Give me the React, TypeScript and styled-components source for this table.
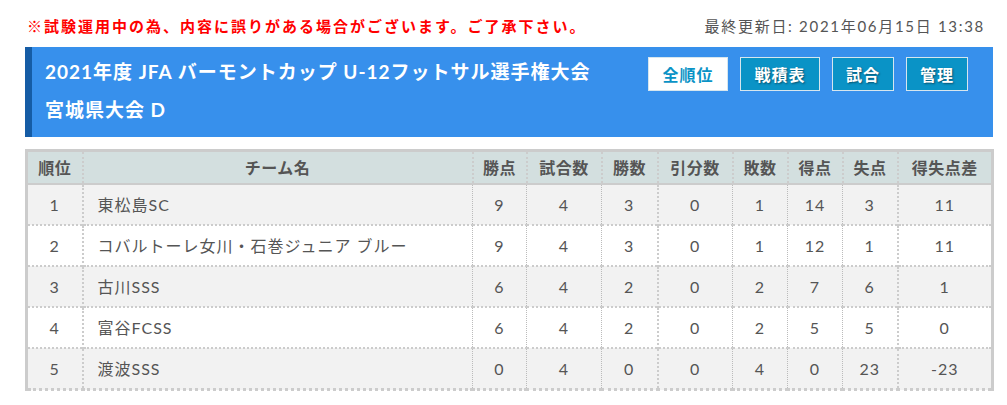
import styled, { createGlobalStyle } from "styled-components";

const GlobalStyle = createGlobalStyle`
  body {
    margin: 0;
    background: #fff;
    font-family: "Lato", "Noto Sans CJK JP", sans-serif;
    color: #555;
  }
`;

const columns = [
  { label: "順位", width: 56 },
  { label: "チーム名", width: 390 },
  { label: "勝点", width: 54 },
  { label: "試合数", width: 75 },
  { label: "勝数", width: 56 },
  { label: "引分数", width: 75 },
  { label: "敗数", width: 55 },
  { label: "得点", width: 55 },
  { label: "失点", width: 55 },
  { label: "得失点差", width: 95 },
];

const rows: (string | number)[][] = [
  [1, "東松島SC", 9, 4, 3, 0, 1, 14, 3, 11],
  [2, "コバルトーレ女川・石巻ジュニア ブルー", 9, 4, 3, 0, 1, 12, 1, 11],
  [3, "古川SSS", 6, 4, 2, 0, 2, 7, 6, 1],
  [4, "富谷FCSS", 6, 4, 2, 0, 2, 5, 5, 0],
  [5, "渡波SSS", 0, 4, 0, 0, 4, 0, 23, -23],
];

const buttons = ["全順位", "戦積表", "試合", "管理"];

export default function App() {
  return (
    <>
      <GlobalStyle />
      <Page>
        <TopBar>
          <Notice>※試験運用中の為、内容に誤りがある場合がございます。ご了承下さい。</Notice>
          <Updated>最終更新日: 2021年06月15日 13:38</Updated>
        </TopBar>
        <Header>
          <Title>
            2021年度 JFA バーモントカップ U-12フットサル選手権大会
            <br />
            宮城県大会 D
          </Title>
          <Nav>
            {buttons.map((b, i) => (
              <NavButton key={b} $active={i === 0} $wide={i < 2}>
                {b}
              </NavButton>
            ))}
          </Nav>
        </Header>
        <Table>
          <colgroup>
            {columns.map((c) => (
              <col key={c.label} style={{ width: c.width }} />
            ))}
          </colgroup>
          <thead>
            <tr>
              {columns.map((c) => (
                <Th key={c.label}>{c.label}</Th>
              ))}
            </tr>
          </thead>
          <tbody>
            {rows.map((r, i) => (
              <Row key={i} $odd={i % 2 === 0}>
                {r.map((v, j) => (
                  <Td key={j} $left={j === 1}>
                    {v}
                  </Td>
                ))}
              </Row>
            ))}
          </tbody>
        </Table>
      </Page>
    </>
  );
}

const Page = styled.div`
  width: 968px;
  margin-left: 25px;
`;

const TopBar = styled.div`
  display: flex;
  justify-content: space-between;
  align-items: center;
  height: 47px;
  padding: 4px 8px 0 2px;
  box-sizing: border-box;
`;

const Notice = styled.span`
  color: #f00;
  font-weight: bold;
  font-size: 15px;
  letter-spacing: 2px;
`;

const Updated = styled.span`
  color: #555;
  font-size: 15px;
  letter-spacing: 1.7px;
`;

const Header = styled.div`
  display: flex;
  justify-content: space-between;
  align-items: flex-start;
  height: 90px;
  box-sizing: border-box;
  background: #3790ec;
  border-left: 7px solid #155ca5;
  padding: 6px 25px 0 13px;
`;

const Title = styled.h1`
  margin: 0;
  color: #fff;
  font-size: 19px;
  font-weight: bold;
  line-height: 38px;
  letter-spacing: 1px;
`;

const Nav = styled.div`
  display: flex;
  gap: 12px;
  margin-top: 4px;
`;

const NavButton = styled.div<{ $active?: boolean; $wide?: boolean }>`
  height: 34px;
  box-sizing: border-box;
  width: ${(p) => (p.$wide ? "80px" : "62px")};
  display: flex;
  align-items: center;
  justify-content: center;
  border: 1px solid #d6e6ee;
  font-size: 16px;
  font-weight: bold;
  letter-spacing: 1px;
  background: ${(p) => (p.$active ? "#fff" : "#0a93c6")};
  color: ${(p) => (p.$active ? "#0a93c6" : "#fff")};
  text-shadow: ${(p) => (p.$active ? "none" : "1px 1px 2px rgba(0,0,0,0.45)")};
`;

const Table = styled.table`
  width: 968px;
  margin-top: 12px;
  border-collapse: collapse;
  table-layout: fixed;
  border: 3px solid #ccc;
  border-bottom: 3px dotted #ccc;
`;

const Th = styled.th`
  background: #d3dfdf;
  height: 31px;
  padding: 0;
  font-size: 16px;
  font-weight: bold;
  letter-spacing: 0.5px;
  line-height: 20px;
  color: #555;
  border-left: 2px dotted #ccc;
  border-bottom: 2px solid #ccc;
  &:first-child {
    border-left: none;
  }
`;

const Row = styled.tr<{ $odd: boolean }>`
  background: ${(p) => (p.$odd ? "#f2f2f2" : "#fff")};
`;

const Td = styled.td<{ $left?: boolean }>`
  height: 39px;
  padding: ${(p) => (p.$left ? "0 0 0 14px" : "0")};
  text-align: ${(p) => (p.$left ? "left" : "center")};
  font-size: 16px;
  line-height: 20px;
  letter-spacing: 1px;
  color: #555;
  border-top: 2px dotted #ccc;
  border-left: 1px dotted #bbb;
  &:first-child {
    border-left: none;
  }
  &:nth-child(2),
  &:nth-child(6),
  &:nth-child(10) {
    border-left: 2px dotted #ccc;
  }
`;
